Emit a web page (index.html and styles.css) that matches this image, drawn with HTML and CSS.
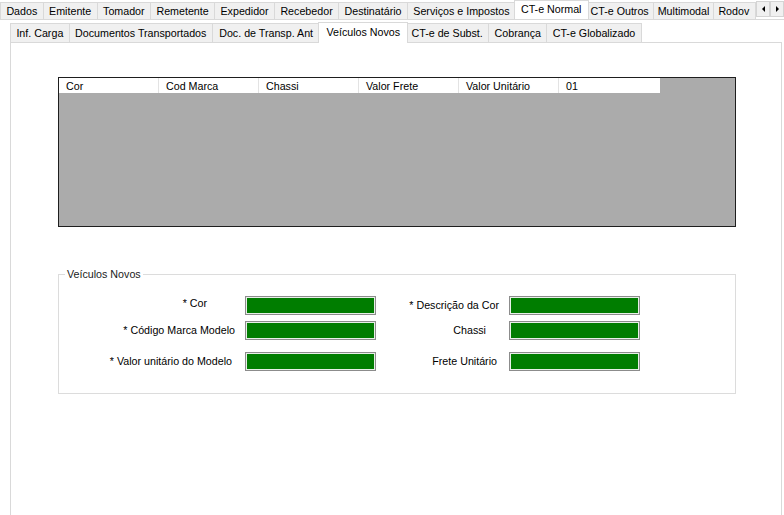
FILE: index.html
```html
<!DOCTYPE html>
<html lang="pt">
<head>
<meta charset="utf-8">
<title>CT-e</title>
<link rel="stylesheet" href="styles.css">
</head>
<body>
<div class="top-strip">
  <div class="tabs">
    <div class="tab">Dados</div>
    <div class="tab">Emitente</div>
    <div class="tab">Tomador</div>
    <div class="tab">Remetente</div>
    <div class="tab">Expedidor</div>
    <div class="tab">Recebedor</div>
    <div class="tab">Destinatário</div>
    <div class="tab">Serviços e Impostos</div>
    <div class="tab sel">CT-e Normal</div>
    <div class="tab tight">CT-e Outros</div>
    <div class="tab tight">Multimodal</div>
    <div class="tab cut">Rodov</div>
  </div>
  <div class="scroll-btns">
    <div class="sbtn"><span class="tri left"></span></div>
    <div class="sbtn"><span class="tri right"></span></div>
  </div>
</div>
<div class="outer-page">
  <div class="inner-strip">
    <div class="tab">Inf. Carga</div>
    <div class="tab">Documentos Transportados</div>
    <div class="tab wide">Doc. de Transp. Ant</div>
    <div class="tab sel">Veículos Novos</div>
    <div class="tab">CT-e de Subst.</div>
    <div class="tab">Cobrança</div>
    <div class="tab">CT-e Globalizado</div>
  </div>
  <div class="inner-page">
    <div class="datagrid">
      <div class="grid-head">
        <div class="hcell">Cor</div>
        <div class="hcell">Cod Marca</div>
        <div class="hcell">Chassi</div>
        <div class="hcell">Valor Frete</div>
        <div class="hcell">Valor Unitário</div>
        <div class="hcell">01</div>
      </div>
    </div>
    <fieldset class="group">
      <legend>Veículos Novos</legend>
      <div class="form">
        <label class="lbl m-cor">* Cor</label>
        <div class="field"></div>
        <label class="lbl">* Descrição da Cor</label>
        <div class="field"></div>

        <label class="lbl">* Código Marca Modelo</label>
        <div class="field"></div>
        <label class="lbl m-chassi">Chassi</label>
        <div class="field"></div>

        <label class="lbl m-valor">* Valor unitário do Modelo</label>
        <div class="field"></div>
        <label class="lbl m-frete">Frete Unitário</label>
        <div class="field"></div>
      </div>
    </fieldset>
  </div>
</div>
</body>
</html>
```

FILE: styles.css
```css
html, body {
  margin: 0;
  padding: 0;
  background: #ffffff;
  overflow: hidden;
}
body {
  width: 784px;
  height: 515px;
  font-family: "Liberation Sans", Arial, sans-serif;
  font-size: 10.7px;
  color: #000;
}

/* top tab strip */
.top-strip {
  display: flex;
  height: 20px;
  position: relative;
}
.tabs {
  display: flex;
  align-items: flex-end;
  flex: 1;
  overflow: hidden;
  height: 20px;
  border-bottom: 1px solid #d9d9d9;
  box-sizing: border-box;
}
.tab {
  height: 17px;
  line-height: 16px;
  padding: 0 5.4px;
  background: #f0f0f0;
  border: 1px solid #d9d9d9;
  border-bottom: none;
  border-left: none;
  box-sizing: border-box;
  white-space: nowrap;
  flex: none;
}
.tabs .tab:first-child {
  border-left: 1px solid #d9d9d9;
}
.tab.tight {
  padding: 0 4px;
}
.tab.wide {
  padding: 0 6.4px;
}
.tab.sel {
  background: #ffffff;
  height: 20px;
  line-height: 17px;
  margin: 0 -2px -1px -2px;
  padding: 0 6px;
  border-left: 1px solid #d9d9d9;
  position: relative;
  z-index: 1;
}
.tab.cut {
  flex: 1 1 auto;
  min-width: 0;
  padding: 0 0 0 4px;
  overflow: visible;
}
.scroll-btns {
  display: flex;
  padding-top: 1px;
  width: 28px;
  flex: none;
  border-bottom: 1px solid #d9d9d9;
  box-sizing: border-box;
}
.sbtn {
  width: 14px;
  height: 16px;
  background: #f0f0f0;
  border: 1px solid #d4d4d4;
  box-sizing: border-box;
  display: flex;
  align-items: center;
  justify-content: center;
}
.tri {
  width: 0;
  height: 0;
  border-top: 3px solid transparent;
  border-bottom: 3px solid transparent;
}
.tri.left { border-right: 3px solid #000; }
.tri.right { border-left: 3px solid #000; }

/* outer page */
.outer-page {
  padding: 2px 2px 0 10px;
}
.inner-strip {
  display: flex;
  align-items: flex-end;
  height: 21px;
  border-bottom: 1px solid #d9d9d9;
  box-sizing: border-box;
}
.inner-strip .tab {
  height: 19px;
  line-height: 18px;
}
.inner-strip .tab:first-child {
  border-left: 1px solid #d9d9d9;
}
.inner-strip .tab.sel {
  height: 21px;
  line-height: 19px;
  margin: 0 -2px -1px -2px;
  padding: 0 7px;
}
.inner-page {
  border: 1px solid #d9d9d9;
  border-top: none;
  height: 480px;
  padding: 34px 0 0 47px;
  box-sizing: border-box;
}

/* grid */
.datagrid {
  width: 678px;
  height: 150px;
  background: #ababab;
  border: 1px solid #1e1e1e;
  box-sizing: border-box;
}
.grid-head {
  display: flex;
  height: 15px;
  background: #ffffff;
  width: 601px;
}
.hcell {
  width: 100px;
  padding-left: 7px;
  box-sizing: border-box;
  line-height: 16px;
  border-right: 1px solid #e3e3e3;
}
.hcell:last-child {
  width: 101px;
  border-right: none;
}

/* group box */
.group {
  width: 678px;
  margin: 41px 0 0 0;
  padding: 15px 0 22px 0;
  border: 1px solid #dcdcdc;
  box-sizing: border-box;
  min-width: 0;
}
.group legend {
  margin-left: 6px;
  padding: 0 2px 0 2px;
  line-height: 13px;
  color: #1a1a1a;
}
.form {
  display: grid;
  grid-template-columns: 186px 131px 133px 131px;
  grid-template-rows: 25px 31px 19px;
  align-items: start;
}
.lbl {
  text-align: right;
  padding-right: 10px;
  height: 19px;
  line-height: 19px;
  white-space: nowrap;
}
.lbl.m-cor { padding-right: 38px; line-height: 14px; }
.lbl.m-valor { padding-right: 13px; }
.lbl.m-chassi { padding-right: 23px; }
.lbl.m-frete { padding-right: 12px; }
.field {
  height: 19px;
  background: #007d00;
  border: 1px solid #8c8c8c;
  box-shadow: inset 0 0 0 1px #e8f0e8;
  box-sizing: border-box;
}
```
